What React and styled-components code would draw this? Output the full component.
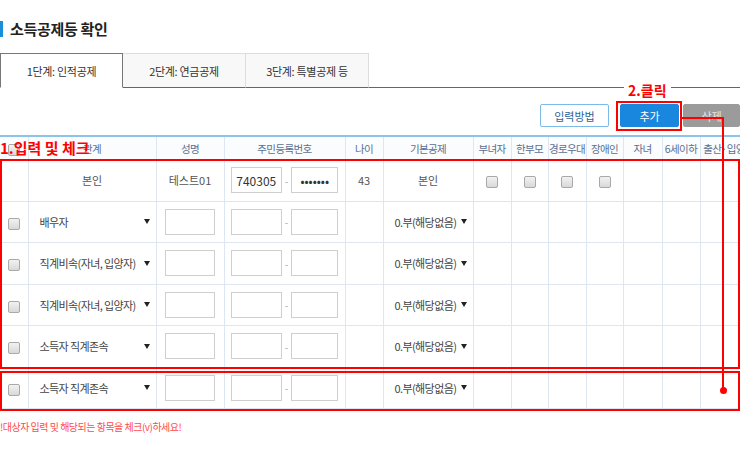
import React from "react";
import styled, { createGlobalStyle } from "styled-components";

const GlobalStyle = createGlobalStyle`
  body {
    margin: 0;
    background: #fff;
    font-family: "Noto Sans CJK KR", "Noto Sans", sans-serif;
  }
`;

const Page = styled.div`
  position: relative;
  width: 740px;
  height: 458px;
  overflow: hidden;
  padding-top: 21px;
  box-sizing: border-box;
  font-family: "Noto Sans CJK KR", "Noto Sans", sans-serif;
`;

const Title = styled.h2`
  margin: 0;
  height: 16px;
  line-height: 16px;
  padding-left: 7px;
  border-left: 3px solid #1b8ed9;
  font-size: 15px;
  font-weight: 700;
  letter-spacing: -0.3px;
  color: #222;
`;

const TabBar = styled.div`
  display: flex;
  margin-top: 16px;
  border-bottom: 1px solid #666;
`;

const Tab = styled.div`
  width: 123px;
  height: 35px;
  display: flex;
  align-items: center;
  justify-content: center;
  font-size: 11px;
  letter-spacing: -0.3px;
  color: #333;
  box-sizing: border-box;
  margin-bottom: -1px;
  background: ${(p) => (p.$active ? "#fff" : "#f8f8f8")};
  border: 1px solid ${(p) => (p.$active ? "#777" : "#ddd")};
  border-bottom: ${(p) => (p.$active ? "1px solid #fff" : "1px solid #666")};
  & + & {
    border-left: none;
  }
`;

const Toolbar = styled.div`
  display: flex;
  justify-content: flex-end;
  margin-top: 16px;
  height: 23px;
`;

const Button = styled.div`
  width: ${(p) => p.$w}px;
  margin-left: ${(p) => p.$gap}px;
  height: 23px;
  box-sizing: border-box;
  display: flex;
  align-items: center;
  justify-content: center;
  font-size: 11px;
  border-radius: 2px;
  ${(p) =>
    p.$kind === "primary"
      ? "background:#1a87de;color:#fff;border:1px solid #1a87de;"
      : p.$kind === "gray"
      ? "background:#9b9b9b;color:#e6e6e6;border:1px solid #9b9b9b;"
      : "background:#fff;color:#2d5f9a;border:1px solid #7cbbe9;"}
`;

const Table = styled.table`
  margin-top: 8px;
  width: 748px;
  table-layout: fixed;
  border-collapse: collapse;
  border-top: 2px solid #8dc2ea;
`;

const Th = styled.th`
  height: 22px;
  padding: 0;
  font-size: 10.5px;
  font-weight: 400;
  letter-spacing: -0.6px;
  color: #5b6f90;
  background: #fafcfe;
  border: 1px solid #dce7f1;
  border-top: none;
  white-space: nowrap;
  overflow: visible;
  &:first-child {
    border-left: none;
  }
`;

const Td = styled.td`
  height: 40.5px;
  padding: 0;
  font-size: 11px;
  color: #555;
  text-align: center;
  white-space: nowrap;
  border: 1px solid #dce7f1;
  &:first-child {
    border-left: none;
  }
`;

const Check = styled.span`
  display: inline-block;
  width: 10px;
  height: 10px;
  border: 1px solid #a9a9a9;
  border-radius: 2px;
  background: linear-gradient(#f2f2f2, #d9d9d9);
  vertical-align: middle;
`;

const Select = styled.div`
  display: flex;
  align-items: center;
  justify-content: space-between;
  padding: 0 ${(p) => p.$right}px 0 ${(p) => p.$left}px;
  font-size: 11px;
  color: #444;
  letter-spacing: -0.6px;
  white-space: nowrap;
`;

const Arrow = styled.span`
  width: 0;
  height: 0;
  border-left: 3px solid transparent;
  border-right: 3px solid transparent;
  border-top: 5px solid #222;
`;

const Field = styled.div`
  display: inline-flex;
  align-items: center;
  justify-content: center;
  width: ${(p) => p.$w}px;
  height: 26px;
  box-sizing: border-box;
  border: 1px solid #cfcfcf;
  background: #fff;
  font-size: 12px;
  color: #333;
  vertical-align: middle;
`;

const IdPair = styled.div`
  display: flex;
  align-items: center;
  justify-content: center;
  gap: 3px;
`;

const Dash = styled.span`
  font-size: 10px;
  color: #aaa;
`;

const Notice = styled.p`
  margin: 10px 0 0;
  font-size: 10px;
  letter-spacing: -0.5px;
  color: #ff4a4a;
`;

const RedBox = styled.div`
  position: absolute;
  left: ${(p) => p.$x}px;
  top: ${(p) => p.$y}px;
  width: ${(p) => p.$w}px;
  height: ${(p) => p.$h}px;
  box-sizing: border-box;
  border: 2px solid #ff0000;
  pointer-events: none;
`;

const RedLine = styled.div`
  position: absolute;
  left: ${(p) => p.$x}px;
  top: ${(p) => p.$y}px;
  width: ${(p) => p.$w}px;
  height: ${(p) => p.$h}px;
  background: #ff0000;
`;

const Dot = styled.div`
  position: absolute;
  left: 720px;
  top: 387px;
  width: 7px;
  height: 7px;
  border-radius: 50%;
  background: #ff0000;
`;

const Label = styled.div`
  position: absolute;
  left: ${(p) => p.$x}px;
  top: ${(p) => p.$y}px;
  padding: 0 ${(p) => p.$pad}px;
  background: ${(p) => (p.$bg ? "#fff" : "transparent")};
  font-size: ${(p) => p.$size}px;
  line-height: 18px;
  font-weight: 700;
  color: #ff0000;
  white-space: nowrap;
`;

const cols = [28, 128, 68, 121, 38, 90, 38, 37, 38, 37, 39, 38, 48];
const heads = ["", "관계", "성명", "주민등록번호", "나이", "기본공제", "부녀자", "한부모", "경로우대", "장애인", "자녀", "6세이하", "출산·입양"];
const relations = ["배우자", "직계비속(자녀, 입양자)", "직계비속(자녀, 입양자)", "소득자 직계존속", "소득자 직계존속"];

function EmptyCells({ n }) {
  return Array.from({ length: n }).map((_, i) => <Td key={i} />);
}

export default function App() {
  return (
    <Page>
      <GlobalStyle />
      <Title>소득공제등 확인</Title>
      <TabBar>
        <Tab $active>1단계: 인적공제</Tab>
        <Tab>2단계: 연금공제</Tab>
        <Tab>3단계: 특별공제 등</Tab>
      </TabBar>
      <Toolbar>
        <Button $w={69} $gap={0}>입력방법</Button>
        <Button $w={59} $gap={11} $kind="primary">추가</Button>
        <Button $w={57} $gap={4} $kind="gray">삭제</Button>
      </Toolbar>
      <Table>
        <colgroup>
          {cols.map((w, i) => (
            <col key={i} style={{ width: w }} />
          ))}
        </colgroup>
        <thead>
          <tr>
            {heads.map((h, i) => (
              <Th key={i}>{i === 0 ? <Check /> : h}</Th>
            ))}
          </tr>
        </thead>
        <tbody>
          <tr>
            <Td />
            <Td>본인</Td>
            <Td>테스트01</Td>
            <Td>
              <IdPair>
                <Field $w={51}>740305</Field>
                <Dash>-</Dash>
                <Field $w={47}>•••••••</Field>
              </IdPair>
            </Td>
            <Td>43</Td>
            <Td>본인</Td>
            <Td><Check /></Td>
            <Td><Check /></Td>
            <Td><Check /></Td>
            <Td><Check /></Td>
            <EmptyCells n={3} />
          </tr>
          {relations.map((r, i) => (
            <tr key={i}>
              <Td><Check /></Td>
              <Td>
                <Select $left={11} $right={6}>
                  {r}
                  <Arrow />
                </Select>
              </Td>
              <Td><Field $w={50} /></Td>
              <Td>
                <IdPair>
                  <Field $w={51} />
                  <Dash>-</Dash>
                  <Field $w={47} />
                </IdPair>
              </Td>
              <Td />
              <Td>
                <Select $left={11} $right={6}>
                  0.부(해당없음)
                  <Arrow />
                </Select>
              </Td>
              <EmptyCells n={7} />
            </tr>
          ))}
        </tbody>
      </Table>
      <Notice>!대상자 입력 및 해당되는 항목을 체크(v)하세요!</Notice>

      <Label $x={624} $y={81} $pad={4} $size={14} $bg>2.클릭</Label>
      <RedBox $x={616} $y={101} $w={66} $h={30} />
      <RedLine $x={682} $y={117} $w={42} $h={2} />
      <RedLine $x={722} $y={117} $w={2} $h={273} />
      <Dot />
      <Label $x={0} $y={139} $pad={0} $size={15}>1.입력 및 체크</Label>
      <RedBox $x={0} $y={159} $w={740} $h={210} />
      <RedBox $x={0} $y={371} $w={740} $h={40} />
    </Page>
  );
}
